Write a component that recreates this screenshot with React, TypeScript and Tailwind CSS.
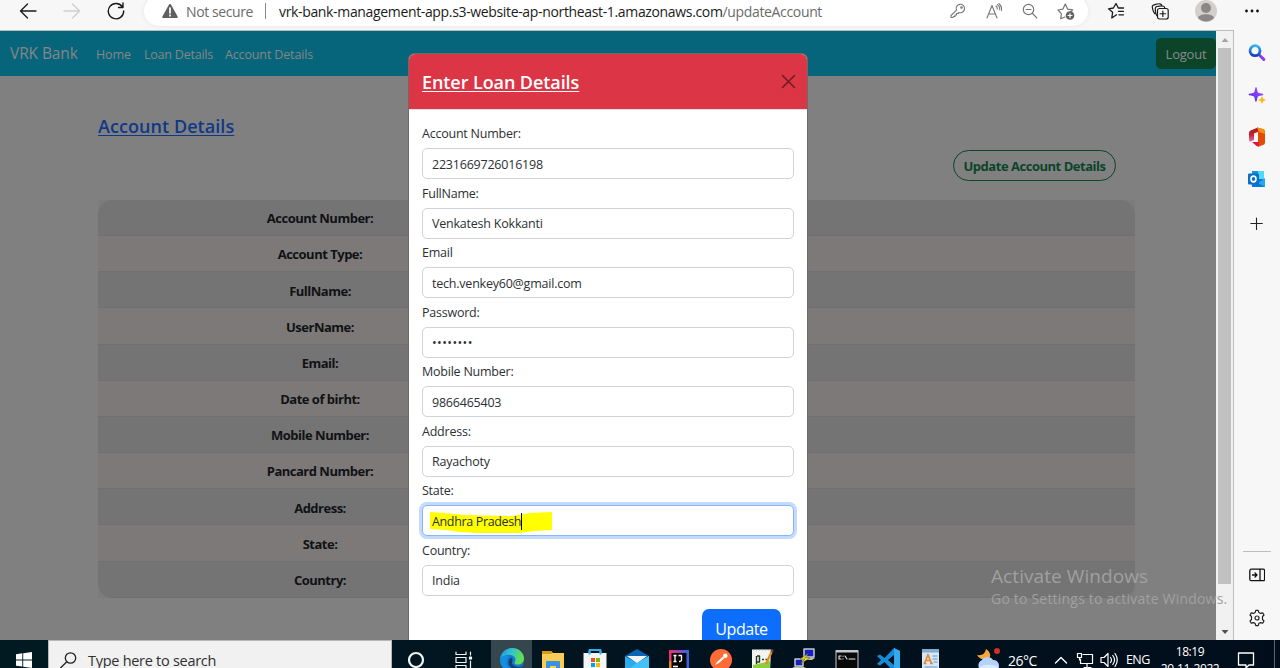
import React from "react";

const rows = [
  "Account Number:",
  "Account Type:",
  "FullName:",
  "UserName:",
  "Email:",
  "Date of birht:",
  "Mobile Number:",
  "Pancard Number:",
  "Address:",
  "State:",
  "Country:",
];

const fields = [
  { label: "Account Number:", value: "2231669726016198" },
  { label: "FullName:", value: "Venkatesh Kokkanti" },
  { label: "Email", value: "tech.venkey60@gmail.com" },
  { label: "Password:", value: "••••••••" },
  { label: "Mobile Number:", value: "9866465403" },
  { label: "Address:", value: "Rayachoty" },
  { label: "State:", value: "Andhra Pradesh", focus: true },
  { label: "Country:", value: "India" },
];

function Cell({ className = "", children }: { className?: string; children: React.ReactNode }) {
  return <div className={`flex shrink-0 items-center justify-center ${className}`}>{children}</div>;
}

function Svg({ s = 24, w, stroke = "none", sw = 1.2, children }: { s?: number; w?: number; stroke?: string; sw?: number; children: React.ReactNode }) {
  return (
    <svg width={w ?? s} height={s} viewBox={`0 0 ${w ?? s} ${s}`} fill="none" stroke={stroke} strokeWidth={sw} strokeLinecap="round" strokeLinejoin="round" className="shrink-0">
      {children}
    </svg>
  );
}

function Toolbar() {
  return (
    <div className="flex h-[30px] shrink-0 items-start bg-[#f7f7f7]">
      <Cell className="ml-[6px] h-[22px] w-11">
        <Svg s={18} stroke="#1b1b1b" sw={1.3}><path d="M17 9H1.5M8.5 2 1.5 9l7 7" /></Svg>
      </Cell>
      <Cell className="h-[22px] w-11">
        <Svg s={18} stroke="#cfcfcf" sw={1.3}><path d="M1 9h15.500M9.500 2l7 7-7 7" /></Svg>
      </Cell>
      <Cell className="h-[22px] w-11">
        <Svg s={18} stroke="#1b1b1b" sw={1.4}><path d="M15.500 5A7.700 7.700 0 1 0 16.700 9M16 1v4.500h-4.500" /></Svg>
      </Cell>
      <div className="-mt-1 ml-[6px] flex h-[30px] w-[944px] items-center rounded-full bg-white pr-1 pl-[18px] shadow-[0_0_4px_#e4e4e4]">
        <Svg s={16}><path d="M7 1.500 .4 13.500c-.4.800 0 1.500 1 1.500h13.200c1 0 1.400-.7 1-1.500L9 1.500c-.5-.8-1.500-.8-2 0z" fill="#606060" /><path d="M8 5v5M8 12.200v.6" stroke="#fff" strokeWidth="1.700" /></Svg>
        <span className="ml-2 w-[79px] text-[14px] tracking-[-0.4px] whitespace-nowrap text-[#6b6b6b]">Not secure</span>
        <span className="h-4 w-px bg-[#8a8a8a]" />
        <span className="ml-[13px] flex-1 text-[14px] tracking-[-0.345px] whitespace-nowrap text-[#1b1b1b]">
          vrk-bank-management-app.s3-website-ap-northeast-1.amazonaws.com<span className="text-[#6b6b6b]">/updateAccount</span>
        </span>
        <Cell className="w-9">
          <Svg s={16} stroke="#767676" sw={1.100}><path d="M6.500 7.200A4.200 4.200 0 1 1 9 9.500L8 10.500H6.500V12H5v1.500H3.500L3 14.500H1V12.500z" /><circle cx="11.500" cy="4.500" r=".8" /></Svg>
        </Cell>
        <Cell className="w-9">
          <Svg s={16} stroke="#767676" sw={1.100}><path d="M1 15 6 2.500 11 15M2.700 11h6.600M10 3c1 .8 1.400 2 1.200 3.200M11.500 1.500c2 1.500 2.500 3.500 2.200 5.500M13 .6c2.300 1.900 3 4.400 2.600 7" /></Svg>
        </Cell>
        <Cell className="w-9">
          <Svg s={16} stroke="#767676" sw={1.200}><circle cx="6.500" cy="6.500" r="5.200" /><path d="m10.500 10.500 4.300 4.300M4 6.500h5" /></Svg>
        </Cell>
        <Cell className="w-9">
          <Svg s={18} stroke="#767676" sw={1.200}><path d="M8 15 3.700 16.800l.7-5L1 8l4.800-.8L8.300 2l2.400 5.200 5 .6-2 2.200" /><circle cx="13" cy="13.500" r="4.300" fill="#606060" stroke="none" /><path d="M13 11.500v4M11 13.500h4" stroke="#fff" /></Svg>
        </Cell>
      </div>
      <Cell className="ml-[6px] h-[22px] w-11">
        <Svg s={18} stroke="#1b1b1b" sw={1.300}><path d="M9.500 12.800 4.800 16l.8-5.700L1.500 6.800l4.900-.8L9 1.500 11.300 6h5.200M11.500 9.300h5M12 12.800h4.500" /></Svg>
      </Cell>
      <Cell className="h-[22px] w-11">
        <Svg s={18} stroke="#1b1b1b" sw={1.200}><path d="M3.700 11.500C2 10 1.200 5 1.300 4.200c.2-1.300 6-2.600 7.700-2.400 1.200.2 1.700 1 2 2.200M5.800 13.500C4.200 12 4 6 4.700 5.100c.8-1 7-1.300 8-.9.600.3 1 .9 1 1.800" /><rect x="6.500" y="6.500" width="10.700" height="10.500" rx="2" fill="#f7f7f7" /><path d="M11.850 9v5.500M9.100 11.750h5.500" /></Svg>
      </Cell>
      <Cell className="ml-[2px] h-[22px] w-11">
        <Svg s={22}><circle cx="11" cy="11" r="11" fill="#d2cfcc" /><circle cx="11" cy="8" r="5" fill="#8b8785" /><path d="M3 18c1-5 15-5 16 0a11 11 0 0 1-16 0" fill="#8b8785" /></Svg>
      </Cell>
      <Cell className="ml-[2px] h-[22px] w-11">
        <Svg s={16}><g fill="#111"><circle cx="2.500" cy="8" r="1.400" /><circle cx="8" cy="8" r="1.400" /><circle cx="13.500" cy="8" r="1.400" /></g></Svg>
      </Cell>
    </div>
  );
}

function Field({ label, value, focus }: { label: string; value: string; focus?: boolean }) {
  const dots = value.startsWith("•");
  return (
    <div className="h-[59.500px]">
      <div className="h-[26px] pt-[1px] text-[12.500px] leading-[22px] tracking-[-0.23px] text-[#2c3034]">{label}</div>
      <div className={`relative flex h-[31px] items-center rounded-[5px] border bg-white px-[9px] pt-[3px] ${focus ? "border-[#86b7fe] shadow-[0_0_0_3px_#c2dbfe]" : "border-[#ced4da]"}`}>
        {focus && (
          <svg className="absolute top-[5px] left-[7px]" width="123" height="22" viewBox="0 0 123 22">
            <path d="M0 1 14 2l21 2 48 1 17-3 22-1v18l-18 1-14 2H46l-17-1-12-2-17-1z" fill="#ff0" />
          </svg>
        )}
        <span className={`relative whitespace-nowrap text-[#2c3034] ${dots ? "text-[12.500px] tracking-[0.4px]" : focus ? "text-[12.500px] tracking-[-0.35px]" : "text-[12.500px] tracking-[-0.22px]"}`}>{value}</span>
        {focus && <span className="relative -mt-[2px] h-[17px] w-px bg-black" />}
      </div>
    </div>
  );
}

function Modal() {
  return (
    <div className="absolute top-[23px] left-[409px] h-[640px] w-[398px] rounded-t-[6px] bg-white shadow-[0_0_0_1px_#6b6b6b]">
      <div className="flex h-14 items-center justify-between rounded-t-[6px] border-b border-[#dee2e6] bg-[#dc3545] pr-[11px] pl-[13px]">
        <h5 className="pt-[2px] text-[18px] font-semibold tracking-[-0.08px] text-white underline decoration-1 underline-offset-2">Enter Loan Details</h5>
        <Svg s={15} stroke="#6e1a22" sw={1.500}><path d="m1.500 1.500 12 12m0-12-12 12" /></Svg>
      </div>
      <div className="px-[13px] pt-3">
        {fields.map((f) => <Field key={f.label} {...f} />)}
        <div className="flex justify-end pt-[11px] pr-[13px]">
          <button className="h-[39px] w-[79px] rounded-[7px] bg-[#0d6efd] text-[16px] tracking-[-0.4px] text-white">Update</button>
        </div>
      </div>
    </div>
  );
}

function Page() {
  return (
    <div className="relative h-full w-[1216px] overflow-hidden bg-[#808080]">
      <nav className="flex h-[45px] items-center bg-[#06657a] text-[12.500px] text-[#868686]">
        <span className="ml-[10px] w-[86px] pt-[1px] text-[15.500px] tracking-[-0.1px]">VRK Bank</span>
        <span className="w-[48px] pt-[3px] tracking-[-0.1px]">Home</span>
        <span className="w-[81px] pt-[3px] tracking-[-0.22px] whitespace-nowrap">Loan Details</span>
        <span className="flex-1 pt-[3px] tracking-[-0.14px]">Account Details</span>
        <button className="h-[31px] w-[60px] rounded-[5px] bg-[#0c442a] pt-[2px] text-[13px] tracking-[-0.2px] text-[#8a8a8a]">Logout</button>
      </nav>
      <h4 className="mt-[37px] ml-[98px] h-[27px] text-[18px] leading-[27px] font-semibold tracking-[0.06px] text-[#10388a] underline decoration-1 underline-offset-2">Account Details</h4>
      <div className="mt-[10px] flex justify-end pr-[100px]">
        <button className="h-[31px] w-[163px] rounded-full border border-[#0c442a] pt-[2px] text-[13px] font-bold tracking-[-0.48px] whitespace-nowrap text-[#0c442a]">Update Account Details</button>
      </div>
      <div className="mt-[19px] ml-[98px] w-[1037px] bg-[#7c7c7c]">
        <div className="overflow-hidden rounded-[15px]">
          {rows.map((r, i) => (
            <div key={r} className={`flex h-[36.170px] items-center border-b border-[#6f7071] ${i % 2 ? "bg-[#7d7979]" : "bg-[#747474]"}`}>
              <span className="w-[444px] pt-[3px] text-center text-[13px] font-bold tracking-[-0.5px] text-[#101214]">{r}</span>
            </div>
          ))}
        </div>
      </div>
      <Modal />
    </div>
  );
}

function Scrollbar() {
  return (
    <div className="flex w-[17px] flex-col items-center bg-[#f1f1f1]">
      <Cell className="h-[17px]"><Svg s={8}><path d="M.5 6 4 2l3.500 4z" fill="#a3a3a3" /></Svg></Cell>
      <div className="h-[536px] w-[13px] bg-[#c1c1c1]" />
      <Cell className="mt-auto h-[17px]"><Svg s={8}><path d="M.5 2 4 6l3.500-4z" fill="#505050" /></Svg></Cell>
    </div>
  );
}

function Sidebar() {
  return (
    <div className="flex flex-1 flex-col items-center bg-[#f7f7f7]">
      <Cell className="mt-[2px] h-[42px]">
        <Svg s={18}><defs><linearGradient id="sg" x1="0" y1="0" x2="0" y2="1"><stop stopColor="#36b5e8" /><stop offset="1" stopColor="#1440c8" /></linearGradient></defs><path d="m11.500 11.200 4.300 4.200" stroke="#8b3fe8" strokeWidth="3" /><circle cx="7" cy="6.700" r="5" stroke="url(#sg)" strokeWidth="2.800" /></Svg>
      </Cell>
      <Cell className="h-[42px]">
        <Svg s={18}><defs><linearGradient id="st" x1="0" y1="1" x2="1" y2="0"><stop stopColor="#3a22f0" /><stop offset="1" stopColor="#c058f0" /></linearGradient></defs><path d="M8 1c1 0 1.200 5 2 5.500C11 7.200 15.500 7.500 15.500 8.500S11 9.800 10 10.500C9.200 11.200 9 16 8 16s-1.200-4.800-2-5.500C5 9.800.5 9.500.5 8.500S5 7.200 6 6.500 7 1 8 1z" fill="url(#st)" /><path d="m14 10 1.200 2.700L18 14l-2.800 1.200L14 18l-1.200-2.800L10 14l2.800-1.300z" fill="#fcb813" /></Svg>
      </Cell>
      <Cell className="h-[42px]">
        <Svg s={20} w={18}><defs><linearGradient id="of" x1="0" y1="0" x2="0" y2="1"><stop stopColor="#b01818" /><stop offset=".5" stopColor="#c4202c" /><stop offset="1" stopColor="#e070b0" /></linearGradient></defs><path d="M10 .5 2.500 3.500Q1 4.200 1 6v7q0 1.500 1.500 1.500L6 13V6.500L11 4.500z" fill="url(#of)" /><path d="M9 .5 15 2q2 .5 2 2.500v11q0 2-2 2.600l-5 1.600V3z" fill="#e34a06" /><path d="M9 .5 15 2q2 .5 2 2.500V7L11 5z" fill="#f58d13" /><path d="M4 15h7v4.500L8.500 19z" fill="#d81b3c" /></Svg>
      </Cell>
      <Cell className="h-[42px]">
        <Svg s={18}><path d="M4 1h12v14H4z" fill="#50d9ff" /><path d="M4 1h6v6H4z" fill="#1490df" /><path d="M3 9h14v8H4z" fill="#0a78d4" /><path d="m10 13 7-5v9z" fill="#28a8ea" /><rect x="0" y="3.500" width="11" height="11" rx="1" fill="#0a6fca" /><ellipse cx="5.500" cy="9" rx="2.500" ry="2.900" stroke="#fff" strokeWidth="1.600" /></Svg>
      </Cell>
      <Cell className="mt-[3px] h-[42px]"><Svg s={14} stroke="#222" sw={1.100}><path d="M6.500 1v11.500M.8 6.500h11.500" /></Svg></Cell>
      <div className="mt-auto h-px w-7 bg-[#bdbdbd]" />
      <Cell className="h-[46px]">
        <Svg s={16} stroke="#111" sw={1.300}><rect x=".8" y="2.200" width="14.800" height="11.500" rx="1.500" /><path d="M11 2.500v11M3.500 8h4.500M6 6l2 2-2 2" /></Svg>
      </Cell>
      <Cell className="mb-[3px] h-[39px]">
        <Svg s={18} stroke="#222" sw={1.200}><path d="m7.200 3.400.6-2h2.400l.6 2 1.800 1 2.100-.6 1.300 2.200-1.500 1.500v3l1.500 1.500-1.300 2.200-2.100-.6-1.800 1-.6 2H7.800l-.6-2-1.800-1-2.100.6L2 12l1.500-1.500v-3L2 6l1.300-2.200 2.100.6z" /><circle cx="9" cy="9" r="2" /></Svg>
      </Cell>
    </div>
  );
}

function TaskIcons() {
  return (
    <>
      <Cell className="w-12"><Svg><circle cx="12" cy="12" r="7" stroke="#f4f4f4" strokeWidth="2.200" /></Svg></Cell>
      <Cell className="w-12">
        <Svg stroke="#f4f4f4" sw={1.200}><path d="M4 4v2.500h10V4M4 20v-2.500h10V20M4 9.500h10v5H4zM18.500 4v3M18.500 13v7" /><path d="M17.500 9h2v2h-2z" fill="#fff" /></Svg>
      </Cell>
      <Cell className="ml-[3px] h-full w-[41px] bg-[#35464e]">
        <Svg>
          <defs><linearGradient id="eg" x1="0" y1="0" x2="1" y2=".3"><stop stopColor="#1598dc" /><stop offset=".5" stopColor="#35c1cf" /><stop offset="1" stopColor="#62e04d" /></linearGradient></defs>
          <circle cx="12" cy="12" r="12" fill="#1478cf" />
          <path d="M.2 11C1 4.500 6 0 12 0c7 0 12 5 12 10.500 0 3.800-3 6-6 6-2.500 0-4-1-3.500-2.300.5-1 1-1.500 1-2.700 0-2.500-3-4.500-6-4.500C5.500 7 1.500 8.500.2 11z" fill="url(#eg)" />
          <path d="M9 8.500C7.500 10 6.500 12 6.700 15c.2 4 3.300 8 7 8.800C5 25-1 17 .3 10.600 2.500 7.500 6.500 7.300 9 8.500z" fill="#1290dd" />
          <path d="M10 10.500c-3 3-1.300 9 4 10.500 3.500.8 6-.5 8-2.500-3 1-8 .5-9.800-2.500-.8-1.500.3-3 .3-4.500 0-1-1.500-2-2.500-1z" fill="#123f72" />
        </Svg>
      </Cell>
      <Cell className="w-[42px]">
        <Svg><path d="M1 3h9l2 2h11v18H1z" fill="#f8cd55" /><path d="M1 3h9l1.500 1.700L10 6H1z" fill="#d99b10" /><path d="M5 14q0-1 1-1h12q1 0 1 1v10h-4v-6H9v6H5z" fill="#3a92e2" /></Svg>
      </Cell>
      <Cell className="w-[42px]">
        <Svg><path d="M6.500 6V2h11v4" stroke="#27b2ee" strokeWidth="2" /><path d="M.5 5h23v19H.5z" fill="#f5f5f5" /><path d="M6.500 3v3.500M17.500 3v3.500" stroke="#27b2ee" strokeWidth="2" strokeLinecap="butt" /><path d="M8 10h4v4H8z" fill="#f25022" /><path d="M13 10h4v4h-4z" fill="#7fba00" /><path d="M8 15h4v4H8z" fill="#00a4ef" /><path d="M13 15h4v4h-4z" fill="#ffb900" /></Svg>
      </Cell>
      <Cell className="w-[42px]">
        <Svg><path d="M0 8 12 1l12 7-12 8z" fill="#0b64b4" /><path d="M2.500 8h19L12 15z" fill="#f3f5f8" /><path d="m0 8 12 7 12-7v16H0z" fill="#2bacec" /><path d="M2 8h20l-10 7z" fill="#f3f5f8" /><path d="m0 24 12-9L24 8v16z" fill="#43c2f6" /></Svg>
      </Cell>
      <Cell className="w-[42px]">
        <Svg><defs><linearGradient id="ig"><stop stopColor="#f3325a" /><stop offset=".55" stopColor="#8f45c5" /><stop offset="1" stopColor="#2868e0" /></linearGradient></defs><path d="M2 2h20v22H2z" fill="url(#ig)" /><path d="M2 13h3v11H2z" fill="#e88028" /><path d="M4.500 5h15v17h-15z" fill="#080808" /><path d="M6.500 7.500h3M8 7.500v6M6.500 13.500h3M11.500 7.500h3v4.500q0 1.500-2.500 1.500M6 18.500h5" stroke="#fff" strokeWidth="1.300" strokeLinecap="butt" /></Svg>
      </Cell>
      <Cell className="w-[42px]">
        <Svg><circle cx="12" cy="12" r="11" fill="#ff6c37" /><path d="m6 17 2-3 6-5.500 1.500 1.500-5.500 5z" fill="#fff" /><circle cx="16.300" cy="7.800" r="2.200" fill="#fff" /></Svg>
      </Cell>
      <Cell className="w-[42px]">
        <Svg><path d="M1 1.500h19l-1 22.500H1z" fill="#f2f4ee" /><path d="M2 17 19 13v11H2z" fill="#8dce3f" /><path d="M5.500 8v8M6 8h2.500v6H6M11 11.500h2m1.500 0h2" stroke="#293820" strokeWidth="1.400" strokeLinecap="butt" /><path d="m20.500 4-5.500 12" stroke="#d99326" strokeWidth="2.400" strokeLinecap="butt" /><path d="m21.700 1.500-1.200 2.500" stroke="#8a3f31" strokeWidth="2.600" strokeLinecap="butt" /><path d="M2 2h17" stroke="#9da396" strokeDasharray="1 2" strokeLinecap="butt" /></Svg>
      </Cell>
      <Cell className="w-[42px]">
        <Svg><path d="M11 1h10v8H11zM2 11h8v7H2z" fill="#1420cc" stroke="#c9c9c3" strokeWidth="1.500" /><path d="m8 10 12-1 2 1-3 2h-8zM0 19l9-1 4 2-2 4H0z" fill="#b9b9b2" /><path d="m16 5-9 6h5l-5 5 10-6h-5z" fill="#ffef1b" stroke="#383100" strokeWidth=".4" /></Svg>
      </Cell>
      <Cell className="w-[42px]">
        <Svg><path d="M1 2.500h22V24H1z" fill="#080808" stroke="#aaa" /><path d="M1 2h22v2.500H1z" fill="#c5c8ca" /><path d="M6 8H4v3h2M8 8v.2m0 2.500v.2M10 8l2 3M14 11h6" stroke="#eee" strokeWidth="1.100" /></Svg>
      </Cell>
      <Cell className="w-[42px]">
        <Svg><path d="m17 0 6 3v18l-6 3L7.500 14 3 17.500 0 16l4-4-4-4 3-1.500L7.500 10zm0 7-6 5 6 5z" fill="#168bd7" /><path d="m17 0 6 3v18l-6 3z" fill="#35a9ed" /></Svg>
      </Cell>
      <Cell className="w-[42px]">
        <Svg><path d="M3 1h17v23H3z" fill="#d7e7f5" /><path d="M3 1h17v3.500H3z" fill="#82adcf" /><path d="m5.500 15.500 3.500-9 3.500 9M7 12.500h4M4.500 15.500h3M11 15.500h3" stroke="#e58a31" strokeWidth="1.700" strokeLinecap="butt" /><path d="M14 8h4M14 11h4M15 14h3M6 19h12" stroke="#5d95c8" /></Svg>
      </Cell>
    </>
  );
}

function Taskbar() {
  return (
    <div className="flex h-10 shrink-0 items-center bg-gradient-to-r from-[#011a22] to-[#010d1b] text-white">
      <Cell className="w-12">
        <Svg s={16}><path d="M0 2.200 6.300 1.300v6.200H0zM7.200 1.200 16 0v7.500H7.200zM0 8.400h6.300v6.200L0 13.700zM7.200 8.400H16V16l-8.800-1.200z" fill="#fff" /></Svg>
      </Cell>
      <div className="flex h-full w-[344px] shrink-0 items-center border border-[#b8b8b8] bg-[#f1f1f1] pl-[11px] text-[#303030]">
        <Svg s={17} stroke="#222" sw={1.300}><circle cx="10.500" cy="6" r="5.200" /><path d="m6.800 9.700-6.300 6.300" /></Svg>
        <span className="ml-[11px] pt-[2px] text-[14.500px] tracking-[-0.28px]">Type here to search</span>
      </div>
      <TaskIcons />
      <Cell className="ml-6 w-6">
        <Svg><path d="M10 1c-1 5-4 7-9 6 2 4 9 7 13 2 1-3-1-6-4-8z" fill="#f8a83a" /><circle cx="21" cy="3" r="3" fill="#cf2f25" /><path d="M6 23a6 6 0 0 1 0-11c2-4 9-4 11 0 6-1 9 9 2 12H6z" fill="#b5d3ff" /><path d="M3 20c4-4 14-4 19-1v5H3z" fill="#dceaff" /></Svg>
      </Cell>
      <span className="ml-2 w-[41px] shrink-0 text-[14px] tracking-[-0.5px]">26°C</span>
      <Cell className="w-6"><Svg s={14} stroke="#fff" sw={1.400}><path d="m1.500 10 5.500-5.500 5.500 5.500" /></Svg></Cell>
      <Cell className="w-6"><Svg s={18} stroke="#fff"><path d="M7 3.500h9.500v9H4.500V8M8 16.500h7M11 13v3M1.500 2.500h4v4h-4zM3.500 6.500V9" /></Svg></Cell>
      <Cell className="w-6"><Svg s={18} stroke="#fff"><path d="M1 6.500h3l4-4v13l-4-4H1zM10.500 6.500q2 2.500 0 5M12.800 4.500q3.500 4.500 0 9M15 2.500q4.500 6.500 0 13" /></Svg></Cell>
      <span className="ml-[5px] w-[25px] shrink-0 text-[12.500px] tracking-[-0.6px]">ENG</span>
      <div className="w-[78px] shrink-0 pt-0 text-center text-[12px] leading-[17px] tracking-[-0.4px]">
        <div>18:19</div>
        <div>29-11-2022</div>
      </div>
      <Cell className="w-[34px]"><Svg s={18} stroke="#fff" sw={1.300}><path d="M1.500 2h15v12h-4.500l-3 3v-3H1.500z" /></Svg></Cell>
      <div className="ml-[11px] h-full w-px shrink-0 bg-[#59636d]" />
    </div>
  );
}

export default function App() {
  return (
    <div className="relative flex h-[668px] w-[1280px] flex-col overflow-hidden bg-[#f7f7f7] font-['Open_Sans','Noto_Sans',sans-serif]">
      <Toolbar />
      <div className="flex h-[610px] shrink-0">
        <div className="flex w-[1234px] border-t border-r border-[#bdbdbd]">
          <Page />
          <Scrollbar />
        </div>
        <Sidebar />
      </div>
      <Taskbar />
      <div className="absolute top-[563px] left-[991px] whitespace-nowrap text-[#a0a0a0]">
        <div className="text-[19px] leading-[26px] tracking-[0.08px]">Activate Windows</div>
        <div className="text-[14px] leading-[20px] tracking-[0.2px]">Go to Settings to activate Windows.</div>
      </div>
    </div>
  );
}
